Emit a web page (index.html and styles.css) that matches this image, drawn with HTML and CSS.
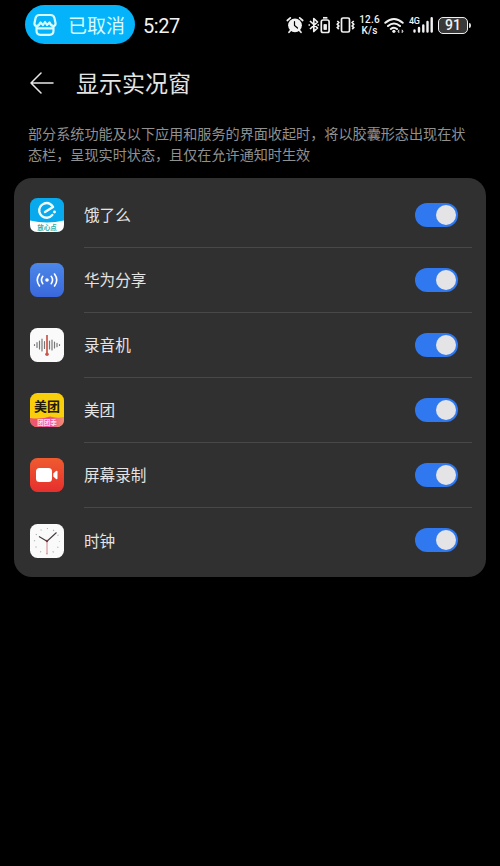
FILE: index.html
```html
<!DOCTYPE html>
<html lang="zh-CN">
<head>
<meta charset="utf-8">
<title>显示实况窗</title>
<link rel="stylesheet" href="styles.css">
</head>
<body>
<div class="status">
  <div class="capsule">
    <svg width="24" height="24" viewBox="0 0 24 24" fill="none" stroke="#d8fbff" stroke-width="2.200" stroke-linejoin="round" stroke-linecap="round"><path d="M6.500 2h11q3.300 0 4 3.200l1 4.800q.3 2.500-2 3-2.500 0-4-3.500L14 12l-2-3-2 3-2.500-2.500Q6 13 3.500 13q-2.300-.5-2-3l1-4.800Q3.200 2 6.500 2z"/><path d="M3.500 13v4.500q0 4.300 4 4.300h9q4 0 4-4.300V13M4.500 15.300h15"/></svg>
    <span>已取消</span>
  </div>
  <div class="time">5:27</div>
  <div class="indicators">
    <svg class="alarm" width="18" height="18" viewBox="0 0 18 18" fill="none" stroke="#f2f2f2" stroke-width="1.700" stroke-linecap="round"><circle cx="9" cy="9.300" r="6.900" fill="#f2f2f2" stroke="none"/><path d="M1.300 4.500 4.300 1.800M16.700 4.500 13.700 1.800M4.500 14.500 3 16.300M13.500 14.500 15 16.300"/><path d="M8.500 5.500v4l3 2.500" stroke="#000" stroke-width="1.200"/></svg>
    <svg class="bt" width="24" height="18" viewBox="0 0 24 18" fill="none" stroke="#f2f2f2" stroke-width="1.700" stroke-linejoin="round"><path d="m2 5 7.500 7L5.800 15.500v-13L9.500 6 2 13"/><path d="M.5 9h1.500M9.500 9H11"/><rect x="13.300" y="4" width="7.800" height="12.500" rx="1.800"/><path d="M15 1.800h4.400"/><path d="M15.900 8.500h2.600v5h-2.600z" fill="#f2f2f2" stroke-width=".8"/></svg>
    <svg class="vib" width="19" height="18" viewBox="0 0 19 18" fill="none" stroke="#f2f2f2" stroke-width="1.700"><rect x="5.500" y="2" width="8" height="14" rx="1.500"/><path d="m1.300 5 1.500 1.500L1.300 8.200 2.800 10 1.300 11.600 2.800 13.200M17.700 5l-1.500 1.500 1.500 1.700-1.500 1.800 1.500 1.600-1.500 1.600"/></svg>
    <div class="speed"><span>12.6</span><span>K/s</span></div>
    <svg class="wifi" width="20" height="17" viewBox="0 0 20 17" fill="none" stroke="#f2f2f2" stroke-width="2" stroke-linecap="round"><path d="M1.300 5.800q8.700-7.600 17.400 0M4 9q6-5 12 0M6.800 12q3.200-2.500 6.200 0"/><circle cx="9.900" cy="14.300" r="1.600" fill="#f2f2f2" stroke="none"/><path d="m14 14 1-1.200v2.800zM19 14l-1-1.200v2.800z" fill="#f2f2f2" stroke-width=".5"/></svg>
    <div class="signal">
      <span>4G</span>
      <svg width="20" height="16" viewBox="0 0 20 16" stroke="#f2f2f2" stroke-width="2.400" stroke-linecap="round"><path d="M1.500 13.500v1M6 11v3.500M10.300 8.500v6M14.500 5v9.500M18.700 1.200v13.300"/></svg>
    </div>
    <div class="battery"><span>91</span></div><i class="nub"></i>
  </div>
</div>

<header class="header">
  <svg width="24" height="22" viewBox="0 0 24 22" fill="none" stroke="#e8e8e8" stroke-width="1.500" stroke-linecap="round" stroke-linejoin="round"><path d="M11 1 1 11l10 10M1 11h22"/></svg>
  <h1>显示实况窗</h1>
</header>
<p class="desc">部分系统功能及以下应用和服务的界面收起时，将以胶囊形态出现在状<br>态栏，呈现实时状态，且仅在允许通知时生效</p>

<main class="card">
  <div class="row">
    <svg class="icon" viewBox="0 0 34 34"><rect width="34" height="34" rx="7.500" fill="#08a9ed"/><path d="M0 22.500q17 4 34 0v4Q34 34 26.500 34h-19Q0 34 0 26.500z" fill="#fff"/><path d="m15 14 8-5Q19.500 3.700 14.200 5.500 8.300 8.100 9.400 14q1.600 5.800 7.700 5.700 3-.2 5.200-2.700" fill="none" stroke="#f3fdff" stroke-width="2.400" stroke-linejoin="round" stroke-linecap="round"/><circle cx="24.500" cy="14" r="1.400" fill="#fff"/><text x="17" y="31.800" text-anchor="middle" class="eleme-tag">放心点</text></svg>
    <div class="content"><span>饿了么</span><i class="switch"></i></div>
  </div>
  <div class="row">
    <svg class="icon" viewBox="0 0 34 34"><defs><linearGradient id="share" x2="0" y2="1"><stop stop-color="#4b87e8"/><stop offset="1" stop-color="#3a68dc"/></linearGradient></defs><rect width="34" height="34" rx="7.500" fill="url(#share)"/><circle cx="17" cy="17" r="1.800" fill="#fff"/><g fill="none" stroke="#fff" stroke-width="1.600" stroke-linecap="round"><path d="M12.800 13.300q-2.700 3.700 0 7.400M21.200 13.300q2.700 3.700 0 7.400M9.500 11q-4.500 6 0 12M24.500 11q4.500 6 0 12"/></g></svg>
    <div class="content"><span>华为分享</span><i class="switch"></i></div>
  </div>
  <div class="row">
    <svg class="icon" viewBox="0 0 34 34"><rect width="34" height="34" rx="7.500" fill="#fafafa"/><path d="M4.500 16.500v1M7 14.500v5M9.500 13v8M12 11v12M14.500 13.500v7M19.500 13v8M22 12v10M24.500 14v6M27 15.300v3.400M29.500 16.500v1" fill="none" stroke="#777" stroke-width="1.200" stroke-linecap="round"/><path d="M17 7v20" stroke="#c7564c" stroke-width="1.700"/><circle cx="17" cy="26.300" r="1.800" fill="#c7564c"/></svg>
    <div class="content"><span>录音机</span><i class="switch"></i></div>
  </div>
  <div class="row">
    <svg class="icon" viewBox="0 0 34 34"><defs><linearGradient id="promo"><stop stop-color="#ee5965"/><stop offset=".55" stop-color="#ed4b9b"/><stop offset="1" stop-color="#f28f6e"/></linearGradient></defs><rect width="34" height="34" rx="7.500" fill="#f9ce0b"/><path d="M0 25q12 1.500 20-1.500 7 2 14 .5v2.500Q34 34 26.500 34h-19Q0 34 0 26.500z" fill="url(#promo)"/><text x="17" y="17.500" text-anchor="middle" class="meituan-name">美团</text><text x="17" y="31.500" text-anchor="middle" class="meituan-tag">团团季</text></svg>
    <div class="content"><span>美团</span><i class="switch"></i></div>
  </div>
  <div class="row">
    <svg class="icon" viewBox="0 0 34 34"><defs><linearGradient id="rec" x2="0" y2="1"><stop stop-color="#ef5b2f"/><stop offset="1" stop-color="#e62f2d"/></linearGradient></defs><rect width="34" height="34" rx="7.500" fill="url(#rec)"/><rect x="6" y="10" width="16" height="14" rx="3.500" fill="#fff"/><path d="M23.300 15.500 26 13q1.500-1 1.500.7v6.600q0 1.700-1.500.7l-2.700-2.500z" fill="#fff"/></svg>
    <div class="content"><span>屏幕录制</span><i class="switch"></i></div>
  </div>
  <div class="row">
    <svg class="icon" viewBox="0 0 34 34"><rect width="34" height="34" rx="7.500" fill="#fafafa"/><circle cx="17" cy="17" r="12.500" fill="none" stroke="#aaa" stroke-width="1.200" stroke-dasharray="1 5.545" stroke-dashoffset=".5"/><path d="m9 12.500 8 4.700 9.500-8.700" fill="none" stroke="#443c3e" stroke-width="1.100"/><path d="M17 16v14.500" stroke="#cb777c" stroke-width=".9"/><circle cx="17" cy="17" r="1.200" fill="#733b40"/></svg>
    <div class="content"><span>时钟</span><i class="switch"></i></div>
  </div>
</main>
</body>
</html>
```
FILE: styles.css
```css
* { box-sizing: border-box; }
body {
  margin: 0;
  height: 866px;
  overflow: hidden;
  background: #000;
  color: #e4e4e4;
  font-family: "Noto Sans", "Noto Sans CJK SC", sans-serif;
}
svg { display: block; flex: none; }
.status { display: flex; align-items: center; height: 50px; padding: 0 0 1px 25px; }
.capsule {
  display: flex; align-items: center; gap: 11px;
  width: 110px; height: 39px; padding-left: 8px;
  border-radius: 20px; background: #05b3fb; color: #d8fbff;
  font: 400 19px/28px "Noto Sans CJK SC", sans-serif; white-space: nowrap;
}
.time { width: 42px; margin-left: 8px; font: 400 20px/28px Roboto, sans-serif; letter-spacing: -.4px; color: #f2f2f2; margin-top: 2px; }
.indicators { display: flex; align-items: center; margin-left: 101px; margin-top: 1px; color: #f2f2f2; }
.bt { margin-left: 4px; }
.vib { margin-left: 4px; }
.speed { display: flex; flex-direction: column; align-items: center; width: 23px; margin-left: 3px; font: 500 10px/11px Roboto, sans-serif; letter-spacing: .2px; }
.wifi { margin-left: 3px; }
.signal { display: flex; position: relative; width: 24px; margin-left: 5px; padding-left: 4px; }
.signal span { position: absolute; left: 0; top: -1px; font: 500 9px/10px Roboto, sans-serif; letter-spacing: -.3px; }
.battery {
  display: flex; align-items: center; justify-content: center;
  width: 30px; height: 17px; margin-left: 5px;
  border: 1.500px solid #eee; border-radius: 5px; background: #393939;
  font: 500 14px/15px Roboto, sans-serif;
}
.nub { width: 2px; height: 5px; margin-left: 1px; border-radius: 0 2px 2px 0; background: #ddd; }

.header { display: flex; align-items: center; gap: 22px; height: 66px; padding-left: 30px; }
h1 { margin: -2px 0 0; font: 400 23px/34px "Noto Sans CJK SC", sans-serif; }
.desc {
  margin: 7px 0 14px; padding-left: 28px; color: #909090;
  font: 400 14.120px/20.500px "Noto Sans CJK SC", sans-serif; white-space: nowrap;
}
.card { width: 472px; height: 399px; margin: 0 14px; padding: 4.500px 14px 0 16px; border-radius: 18px; background: #303030; }
.row { display: flex; align-items: center; height: 65.100px; }
.icon { width: 34px; height: 34px; }
.content {
  display: flex; align-items: center; justify-content: space-between;
  flex: 1; height: 100%; margin-left: 20px; padding-right: 14px;
  border-bottom: 1px solid #484848;
  font: 400 15.600px/24px "Noto Sans CJK SC", sans-serif;
}
.content span { padding-bottom: 1px; }
.row:last-child .content { border-bottom-color: transparent; }
.switch { display: flex; justify-content: flex-end; align-items: center; width: 43px; height: 24px; padding-right: 2px; border-radius: 12px; background: #2f78f0; }
.switch::after { content: ""; width: 20px; height: 20px; border-radius: 50%; background: #e4e4e6; }
.eleme-tag { font: 700 6.500px "Noto Sans CJK SC", sans-serif; fill: #2cafa9; }
.meituan-name { font: 700 13px "Noto Sans CJK SC", sans-serif; fill: #201a08; }
.meituan-tag { font: 700 6.500px "Noto Sans CJK SC", sans-serif; fill: #ffe1ef; }
```
